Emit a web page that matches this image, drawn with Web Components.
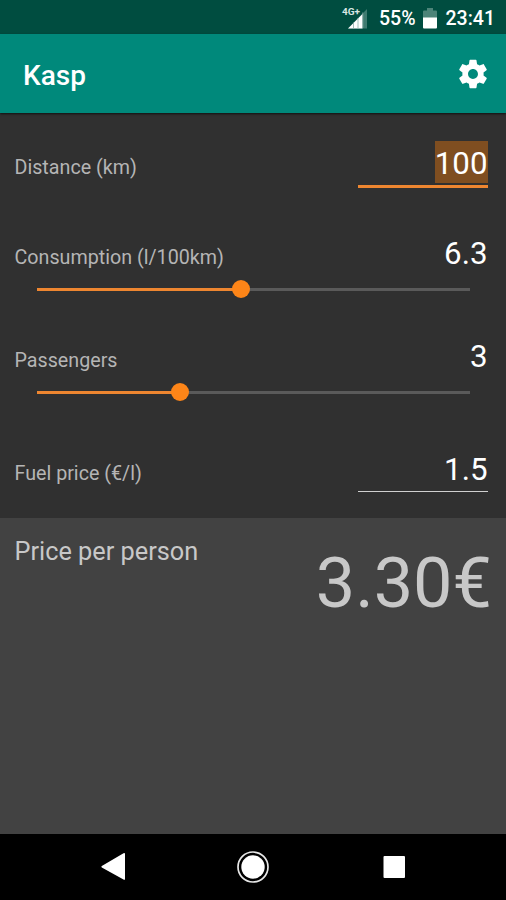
<!DOCTYPE html>
<html lang="en">
<head>
<meta charset="utf-8">
<title>Kasp</title>
<style>
  body { margin: 0; width: 506px; height: 900px; overflow: hidden; background: #303030; font-family: Roboto, "Noto Sans", sans-serif; color: #fff; }
</style>
</head>
<body>
<kasp-app></kasp-app>
<script>
const define = (name, html, setup) => customElements.define(name, class extends HTMLElement {
  constructor() {
    super();
    const t = document.createElement('template');
    t.innerHTML = html;
    this.attachShadow({ mode: 'open' }).append(t.content.cloneNode(true));
  }
  connectedCallback() { if (setup) setup(this, this.shadowRoot); }
});

define('status-bar', `
<style>
  :host { display: flex; height: 34px; background: #004d40; align-items: center; justify-content: flex-end; box-sizing: border-box; padding: 3px 11px 0 0; font-size: 19.500px; font-weight: 500; line-height: 31px; }
  svg { display: block; flex: none; }
  .signal { margin-right: 10.500px; }
  .battery { margin: 0 9px 0 7px; }
</style>
<svg class="signal" width="27" height="32" viewBox="0 0 27 32">
  <text x="1" y="11.500" font-family="Roboto, sans-serif" font-size="9.500" font-weight="700" fill="#d9e6e3" textLength="18" lengthAdjust="spacingAndGlyphs">4G+</text>
  <path d="M26 6V25.500H7Z" fill="#3f7b70"/>
  <path d="M21.500 11V25.500H7Z" fill="#fff"/>
  <path d="M12.500 19.500V25M17 15V25M21.800 9.500V25" stroke="#8bafa8" stroke-width=".8"/>
</svg>
<span>55%</span>
<svg class="battery" width="14" height="32" viewBox="0 0 14 32">
  <path d="M4 5H10V7.500H13Q14 7.500 14 8.500V16H0V8.500Q0 7.500 1 7.500H4Z" fill="#4d8479"/>
  <path d="M0 14.500H14V24.500Q14 25.500 13 25.500H1Q0 25.500 0 24.500Z" fill="#fff"/>
</svg>
<span>23:41</span>`);

define('app-bar', `
<style>
  :host { display: flex; height: 79px; box-sizing: border-box; background: #00897b; align-items: center; justify-content: space-between; padding: 0 16px 0 23px; position: relative; box-shadow: 0 1px 2px #000a; }
  h1 { margin: 4px 0 0; font-size: 28px; line-height: 34px; font-weight: 500; }
  svg { display: block; }
</style>
<h1><slot></slot></h1>
<svg width="34" height="34" viewBox="0 0 24 24" fill="#fff"><path d="M19.430 12.980c.04-.32.07-.64.07-.98s-.03-.66-.07-.98l2.110-1.650c.19-.15.24-.42.12-.64l-2-3.460c-.12-.22-.39-.3-.61-.22l-2.490 1c-.52-.4-1.080-.73-1.690-.98l-.38-2.650C14.460 2.180 14.250 2 14 2h-4c-.25 0-.46.18-.49.42l-.38 2.650c-.61.25-1.170.59-1.690.98l-2.490-1c-.23-.09-.49 0-.61.22l-2 3.460c-.13.22-.07.49.12.64l2.110 1.650c-.04.32-.07.65-.07.98s.03.66.07.98l-2.110 1.650c-.19.15-.24.42-.12.64l2 3.460c.12.22.39.3.61.22l2.490-1c.52.4 1.080.73 1.690.98l.38 2.650c.03.24.24.42.49.42h4c.25 0 .46-.18.49-.42l.38-2.650c.61-.25 1.170-.59 1.690-.98l2.490 1c.23.09.49 0 .61-.22l2-3.460c.12-.22.07-.49-.12-.64l-2.110-1.650zM12 15.500c-1.930 0-3.500-1.570-3.500-3.500s1.570-3.500 3.500-3.500 3.500 1.570 3.500 3.500-1.570 3.500-3.500 3.500z"/></svg>`);

define('field-row', `
<style>
  :host { display: block; }
  .line { display: flex; height: 42px; align-items: baseline; justify-content: space-between; padding: 0 18.500px 0 14.500px; }
  .label { font-size: 19.700px; color: #b5b5b5; }
  .value { font-size: 31.300px; line-height: 45px; height: 42px; }
  :host([selected]) .value { background: #7f4e20; }
</style>
<div class="line"><span class="label"></span><span class="value"></span></div>
<slot></slot>`, (el, root) => {
  root.querySelector('.label').textContent = el.getAttribute('label');
  root.querySelector('.value').textContent = el.getAttribute('value');
});

define('input-underline', `
<style>
  :host { display: block; width: 130px; height: 1.500px; margin: 2px 18.500px 0 auto; background: #d0d0d0; }
  :host([active]) { height: 3px; margin-top: 2px; background: #ee8630; }
</style>`);

define('value-slider', `
<style>
  :host { display: flex; align-items: center; height: 18px; margin: 7.500px 36px 0 37px; }
  .done { height: 3px; background: #ee8630; width: var(--fill); }
  .thumb { width: 18px; height: 18px; border-radius: 50%; background: #fd8518; margin: 0 -9px; z-index: 1; }
  .rest { height: 3px; background: #5a5a5a; flex: 1; }
</style>
<div class="done"></div><div class="thumb"></div><div class="rest"></div>`);

define('price-panel', `
<style>
  :host { display: flex; flex: 1; background: #424242; color: #c8c8c8; justify-content: space-between; align-items: flex-start; padding: 0 14px 0 14.500px; }
  .title { font-size: 25.300px; line-height: 32px; margin-top: 18px; }
  .total { font-size: 70.200px; line-height: 84px; margin-top: 23px; }
</style>
<span class="title"><slot></slot></span><span class="total"><slot name="total"></slot></span>`);

define('nav-bar', `
<style>
  :host { display: flex; height: 66px; background: #000; align-items: center; justify-content: space-between; padding: 0 101px 0 100px; }
  svg { display: block; }
  .home { margin-left: -3px; }
</style>
<svg width="26" height="30" viewBox="0 0 26 30" fill="#fff"><path d="M1.800 14L23.500 1.300Q25 .600 25 2V27Q25 28.400 23.500 27.500L1.800 15.500Q.800 14.800 1.800 14Z"/></svg>
<svg class="home" width="34" height="34" viewBox="0 0 34 34"><circle cx="17" cy="17" r="15" fill="none" stroke="#e8e8e8" stroke-width="1.700"/><circle cx="17" cy="17" r="11.700" fill="#fff"/></svg>
<svg width="22" height="23" viewBox="0 0 22 23"><rect x=".5" y="0" width="21.500" height="22" rx="1" fill="#fff"/></svg>`);

define('kasp-app', `
<style>
  :host { display: flex; flex-direction: column; width: 506px; height: 900px; }
  form { margin: 0; height: 404.500px; display: grid; grid-template-rows: 89.500px 103.300px 113.200px auto; padding-top: 28px; box-sizing: border-box; background: #303030; }
</style>
<status-bar></status-bar>
<app-bar>Kasp</app-bar>
<form>
  <field-row label="Distance (km)" value="100" selected><input-underline active></input-underline></field-row>
  <field-row label="Consumption (l/100km)" value="6.3"><value-slider style="--fill:204px"></value-slider></field-row>
  <field-row label="Passengers" value="3"><value-slider style="--fill:143px"></value-slider></field-row>
  <field-row label="Fuel price (€/l)" value="1.5"><input-underline></input-underline></field-row>
</form>
<price-panel>Price per person<span slot="total">3.30€</span></price-panel>
<nav-bar></nav-bar>`);
</script>
</body>
</html>
